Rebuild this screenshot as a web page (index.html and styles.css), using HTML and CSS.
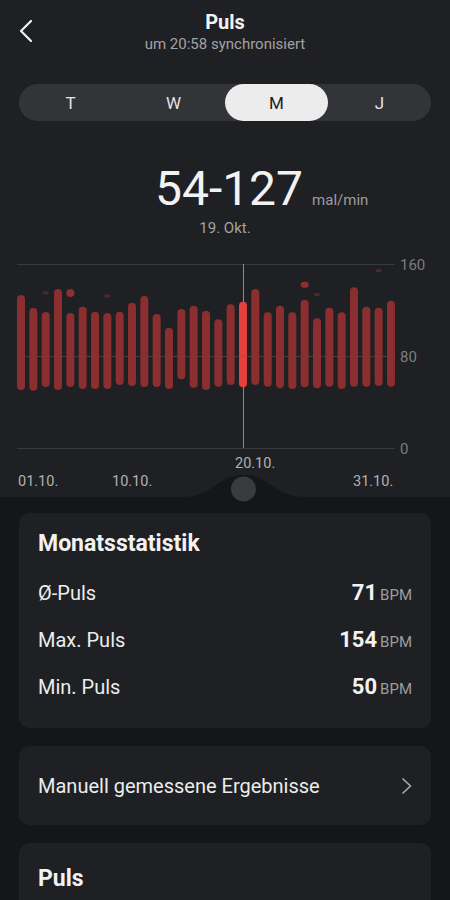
FILE: index.html
```html
<!DOCTYPE html>
<html lang="de">
<head>
<meta charset="utf-8">
<title>Puls</title>
<link rel="stylesheet" href="styles.css">
</head>
<body>
<div class="top">
  <header class="header">
    <button class="back" aria-label="Zurück">
      <svg width="14" height="24" viewBox="0 0 14 24"><path d="M12 2 L2 12 L12 22" fill="none" stroke="#f2f2f2" stroke-width="2.2" stroke-linecap="round" stroke-linejoin="round"/></svg>
    </button>
    <h1 class="title">Puls</h1>
    <div class="subtitle">um 20:58 synchronisiert</div>
  </header>

  <nav class="segments">
    <span class="seg">T</span>
    <span class="seg">W</span>
    <span class="seg active">M</span>
    <span class="seg">J</span>
  </nav>

  <div class="readout">
    <div class="range-row">
      <span></span>
      <span class="range">54-127</span>
      <span class="unit">mal/min</span>
    </div>
    <div class="date">19. Okt.</div>
  </div>

  <svg class="chart" width="450" height="259" viewBox="0 0 450 259">
    <g stroke="#38393c" stroke-width="1">
      <line x1="17" y1="26.5" x2="395" y2="26.5"/>
      <line x1="17" y1="118.5" x2="395" y2="118.5"/>
      <line x1="17" y1="210.5" x2="395" y2="210.5"/>
    </g>
    <g class="ylab">
      <text x="400" y="32">160</text>
      <text x="400" y="124">80</text>
      <text x="400" y="216">0</text>
    </g>
    <line x1="243.5" y1="26" x2="243.5" y2="210" stroke="#8a8a8c" stroke-width="1"/>
    <g id="bars"></g>
    <line x1="17" y1="118.5" x2="395" y2="118.5" stroke="#6a4444" stroke-opacity="0.35" stroke-width="1"/>
    <g class="xlab">
      <text x="18" y="248">01.10.</text>
      <text x="112" y="248">10.10.</text>
      <text x="235" y="230">20.10.</text>
      <text x="353" y="248">31.10.</text>
    </g>
  </svg>
</div>

<main class="sheet">
  <div class="handle">
    <svg width="121" height="28" viewBox="0 0 121 28">
      <path d="M0 22 C30 22 34 0 60.5 0 C87 0 91 22 121 22 L121 28 L0 28 Z" fill="#151618"/>
      <circle cx="60.5" cy="14" r="12.5" fill="#3a3b3e"/>
    </svg>
  </div>

  <section class="card stats">
    <h2 class="card-title">Monatsstatistik</h2>
    <div class="row"><span class="label">Ø-Puls</span><span class="val"><b>71</b><small>BPM</small></span></div>
    <div class="row"><span class="label">Max. Puls</span><span class="val"><b>154</b><small>BPM</small></span></div>
    <div class="row"><span class="label">Min. Puls</span><span class="val"><b>50</b><small>BPM</small></span></div>
  </section>

  <section class="card link">
    <span class="label">Manuell gemessene Ergebnisse</span>
    <svg width="12" height="18" viewBox="0 0 12 18"><path d="M2 2 L9.5 9 L2 16" fill="none" stroke="#a8a8aa" stroke-width="1.7" stroke-linecap="round" stroke-linejoin="round"/></svg>
  </section>

  <section class="card puls">
    <h2 class="card-title">Puls</h2>
  </section>
</main>

<script src="chart.js"></script>
</body>
</html>
```

FILE: chart.js
```js
(function () {
  var ns = "http://www.w3.org/2000/svg";
  var off = 238;
  // [top, bottom] in page pixels
  var bars = [
    [295, 390], [308, 390.7], [312, 387], [289, 390], [313, 387],
    [306.7, 389], [311.7, 389], [313, 389], [311.7, 385], [302.7, 386],
    [296, 387], [314, 387], [327.7, 389], [309, 379.3], [305.7, 387.7],
    [310.7, 390], [319.3, 386.7], [304.3, 385], [301.7, 387.3], [289, 385],
    [312.3, 386.7], [305.7, 388.3], [312.3, 389], [300, 387.3], [318.3, 388.3],
    [307.7, 386.7], [312.3, 389], [287.3, 386.7], [306.7, 386.7], [307.7, 386],
    [300.7, 386.7]
  ];
  // dots: [barIndex, top, height, color]
  var dots = [
    [2, 291.5, 3, "#4e2a2b"],
    [4, 289, 8, "#8e2f30"],
    [7, 294.5, 3, "#4e2a2b"],
    [23, 281.7, 6, "#8e2f30"],
    [24, 293, 3, "#4e2a2b"],
    [29, 269, 3, "#4e2a2b"]
  ];
  var g = document.getElementById("bars");
  function rect(x, y, w, h, fill) {
    var r = document.createElementNS(ns, "rect");
    r.setAttribute("x", x);
    r.setAttribute("y", y);
    r.setAttribute("width", w);
    r.setAttribute("height", h);
    r.setAttribute("rx", Math.min(4, h / 2));
    r.setAttribute("fill", fill);
    g.appendChild(r);
  }
  bars.forEach(function (b, i) {
    var cx = 21 + i * 12.333;
    rect(cx - 4, b[0] - off, 8, b[1] - b[0], i === 18 ? "#e6403d" : "#8a2e2f");
  });
  dots.forEach(function (d) {
    var cx = 21 + d[0] * 12.333;
    var w = d[2] < 5 ? 6 : 8;
    rect(cx - w / 2, d[1] - off, w, d[2], d[3]);
  });
})();
```

FILE: styles.css
```css
* { box-sizing: border-box; }

html, body {
  margin: 0;
  padding: 0;
}

body {
  width: 450px;
  min-height: 900px;
  background: #151618;
  color: #f0f0f0;
  font-family: Roboto, "Noto Sans", "Liberation Sans", sans-serif;
  overflow: hidden;
}

.top {
  background: #1f2023;
}

.header {
  position: relative;
  padding-top: 10px;
  text-align: center;
  height: 54px;
}

.back {
  position: absolute;
  left: 19px;
  top: 19px;
  padding: 0;
  border: 0;
  background: none;
  width: 14px;
  height: 24px;
}

.back svg { display: block; }

.title {
  margin: 0;
  font-size: 20px;
  line-height: 24px;
  font-weight: 700;
  color: #f2f2f2;
}

.subtitle {
  font-size: 15px;
  line-height: 20px;
  color: #a3a3a5;
}

.segments {
  margin: 30px 19px 0;
  height: 37px;
  border-radius: 19px;
  background: #333437;
  display: grid;
  grid-template-columns: repeat(4, 1fr);
}

.seg {
  display: flex;
  align-items: center;
  justify-content: center;
  font-size: 17px;
  color: #e2e2e2;
  border-radius: 19px;
}

.seg.active {
  background: #ececec;
  color: #1c1c1e;
}

.readout {
  margin-top: 40px;
}

.range-row {
  display: grid;
  grid-template-columns: 1fr auto 1fr;
  align-items: baseline;
  column-gap: 9px;
  padding-left: 8px;
}

.range {
  font-size: 48px;
  line-height: 56px;
  font-weight: 400;
  color: #f2f2f2;
}

.unit {
  font-size: 15px;
  color: #9c9c9e;
}

.date {
  margin-top: 1px;
  text-align: center;
  font-size: 15px;
  line-height: 20px;
  color: #a3a3a5;
}

.chart {
  display: block;
}

.ylab text {
  font-family: Roboto, "Liberation Sans", sans-serif;
  font-size: 15px;
  fill: #7c7c7e;
}

.xlab text {
  font-family: Roboto, "Liberation Sans", sans-serif;
  font-size: 14.5px;
  fill: #b2b2b4;
}

.sheet {
  position: relative;
  padding: 16px 19px 0;
  display: flex;
  flex-direction: column;
  gap: 18px;
}

.handle {
  position: absolute;
  top: -22px;
  left: 183px;
  width: 121px;
  height: 28px;
}

.handle svg { display: block; }

.card {
  background: #1f2023;
  border-radius: 10px;
  padding: 0 19px;
}

.card-title {
  margin: 0;
  font-size: 23px;
  line-height: 28px;
  font-weight: 700;
  color: #f2f2f2;
}

.stats {
  padding-top: 17px;
  padding-bottom: 18px;
}

.stats .card-title {
  margin-bottom: 11px;
}

.row {
  height: 47px;
  display: flex;
  align-items: center;
  justify-content: space-between;
}

.label {
  font-size: 20px;
  color: #ececec;
}

.val {
  display: flex;
  align-items: baseline;
  gap: 3px;
}

.val b {
  font-size: 22px;
  font-weight: 700;
  color: #f2f2f2;
}

.val small {
  font-size: 15px;
  color: #9c9c9e;
}

.link {
  height: 79px;
  display: flex;
  align-items: center;
  justify-content: space-between;
}

.link svg {
  display: block;
  margin-right: -1px;
}

.puls {
  padding-top: 22px;
  height: 80px;
}
```
